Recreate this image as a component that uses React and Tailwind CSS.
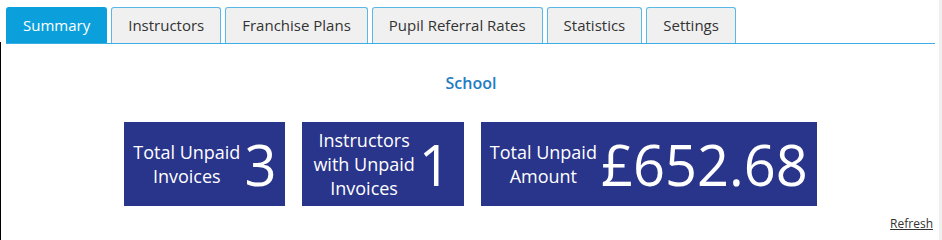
import { useState } from "react";

const TABS = ["Summary", "Instructors", "Franchise Plans", "Pupil Referral Rates", "Statistics", "Settings"];

function StatBox({ label, value, wide }) {
  return (
    <div
      className={
        "h-[84px] bg-[#29348b] flex items-center gap-[4px] text-white " +
        (wide ? "pl-[11px] pr-[13px]" : "pl-[9px] pr-[9px]")
      }
    >
      <div className="text-[18px] leading-[24px] text-center">
        {label.map((line) => (
          <div key={line}>{line}</div>
        ))}
      </div>
      <div className="text-[56px] leading-none">{value}</div>
    </div>
  );
}

export default function App() {
  const [active, setActive] = useState("Summary");

  return (
    <div className="w-[942px] h-[240px] bg-white font-['Open_Sans',sans-serif] text-[#333] relative overflow-hidden">
      {/* left frame edge */}
      <div className="absolute left-0 top-[42px] bottom-0 w-px bg-black" />
      {/* scrollbar strip */}
      <div className="absolute right-0 top-0 bottom-0 w-[3px] bg-[#f0f0f0]" />

      {/* tabs */}
      <div className="pt-[7px] pl-[6px] pr-[7px]">
        <div className="flex gap-[4px] border-b border-[#3aade4]">
          {TABS.map((t) => (
            <button
              key={t}
              onClick={() => setActive(t)}
              className={
                "h-[36px] px-[16px] text-[15px] rounded-t-[3px] border border-b-0 " +
                (active === t
                  ? "bg-[#0ba0dc] border-[#0ba0dc] text-white"
                  : "bg-[#f0f0f0] border-[#5ab8e6] text-[#333]")
              }
            >
              {t}
            </button>
          ))}
        </div>
      </div>

      {/* summary */}
      <div className="text-center text-[#1f7cc2] text-[16px] font-semibold mt-[27px] leading-[24px]">School</div>

      <div className="flex justify-center gap-[17px] mt-[27px] pr-[1px]">
        <StatBox label={["Total Unpaid", "Invoices"]} value="3" />
        <StatBox label={["Instructors", "with Unpaid", "Invoices"]} value="1" wide />
        <StatBox label={["Total Unpaid", "Amount"]} value="£652.68" />
      </div>

      <div className="flex justify-end pr-[9px] mt-[9px]">
        <a href="#" className="text-[12px] underline text-[#333]">Refresh</a>
      </div>
    </div>
  );
}
